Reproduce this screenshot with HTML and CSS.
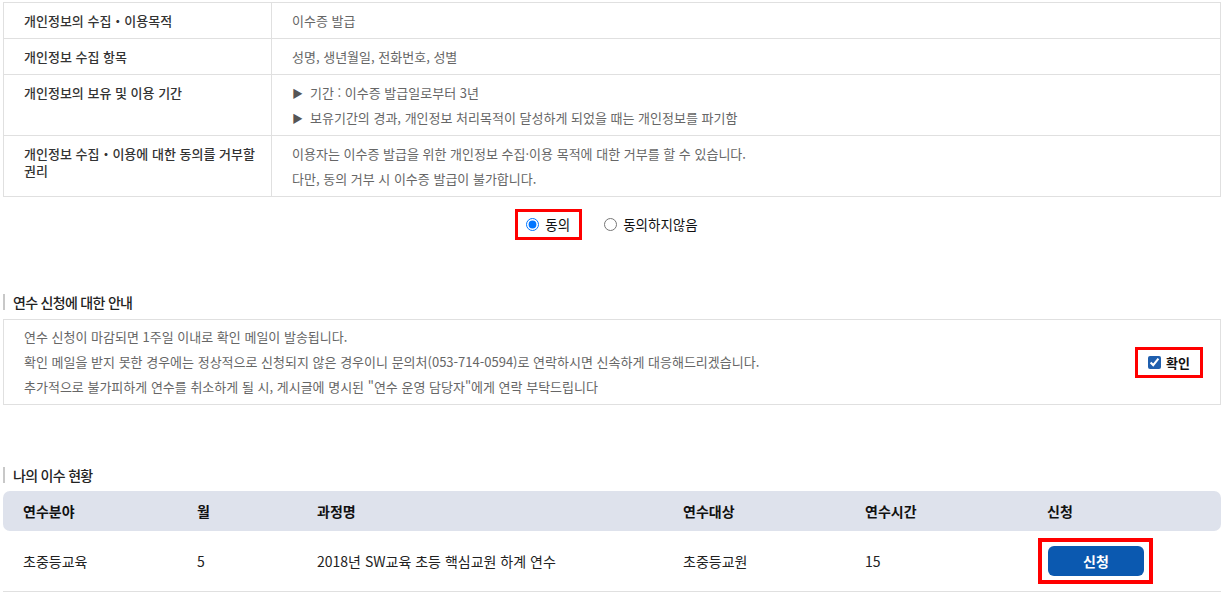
FILE: index.html
```html
<!DOCTYPE html>
<html lang="ko">
<head>
  <meta charset="UTF-8" />
  <meta name="viewport" content="width=device-width, initial-scale=1.0"/>
  <title>연수 신청</title>
  <link rel="stylesheet" href="styles.css">
</head>
<body>
  <div class="wrap">
    <table class="privacy">
      <colgroup>
        <col style="width:268px">
        <col>
      </colgroup>
      <tr>
        <th>개인정보의 수집・이용목적</th>
        <td><p>이수증 발급</p></td>
      </tr>
      <tr>
        <th>개인정보 수집 항목</th>
        <td><p>성명, 생년월일, 전화번호, 성별</p></td>
      </tr>
      <tr>
        <th>개인정보의 보유 및 이용 기간</th>
        <td>
          <p><span class="arrow">▶</span>기간 : 이수증 발급일로부터 3년</p>
          <p><span class="arrow">▶</span>보유기간의 경과, 개인정보 처리목적이 달성하게 되었을 때는 개인정보를 파기함</p>
        </td>
      </tr>
      <tr>
        <th>개인정보 수집・이용에 대한 동의를 거부할 권리</th>
        <td>
          <p>이용자는 이수증 발급을 위한 개인정보 수집·이용 목적에 대한 거부를 할 수 있습니다.</p>
          <p>다만, 동의 거부 시 이수증 발급이 불가합니다.</p>
        </td>
      </tr>
    </table>

    <div class="agree">
      <label class="mark"><input type="radio" name="agree" checked> 동의</label>
      <label class="no"><input type="radio" name="agree"> 동의하지않음</label>
    </div>

    <h3 class="sec-title">연수 신청에 대한 안내</h3>
    <div class="notice">
      <div class="notice-text">
        <p>연수 신청이 마감되면 1주일 이내로 확인 메일이 발송됩니다.</p>
        <p>확인 메일을 받지 못한 경우에는 정상적으로 신청되지 않은 경우이니 문의처(053-714-0594)로 연락하시면 신속하게 대응해드리겠습니다.</p>
        <p>추가적으로 불가피하게 연수를 취소하게 될 시, 게시글에 명시된 "연수 운영 담당자"에게 연락 부탁드립니다</p>
      </div>
      <label class="mark check"><input type="checkbox" checked> 확인</label>
    </div>

    <h3 class="sec-title second">나의 이수 현황</h3>
    <table class="status">
      <colgroup>
        <col style="width:174px">
        <col style="width:120px">
        <col style="width:366px">
        <col style="width:182px">
        <col style="width:182px">
        <col>
      </colgroup>
      <thead>
        <tr>
          <th>연수분야</th>
          <th>월</th>
          <th>과정명</th>
          <th>연수대상</th>
          <th>연수시간</th>
          <th>신청</th>
        </tr>
      </thead>
      <tbody>
        <tr>
          <td>초중등교육</td>
          <td>5</td>
          <td>2018년 SW교육 초등 핵심교원 하계 연수</td>
          <td>초중등교원</td>
          <td>15</td>
          <td class="btn-cell"><span class="mark-btn"><button type="button">신청</button></span></td>
        </tr>
      </tbody>
    </table>
  </div>
</body>
</html>
```

FILE: styles.css
```css
body {
  margin: 0;
  font-family: "Noto Sans CJK KR", sans-serif;
  font-size: 13px;
  color: #333;
  background: #fff;
}

.wrap {
  padding: 2px 3px 0 3px;
}

p {
  margin: 0;
}

.privacy {
  width: 100%;
  table-layout: fixed;
  border-collapse: collapse;
  border: 1px solid #e0e0e0;
}

.privacy th,
.privacy td {
  border-top: 1px solid #e0e0e0;
  vertical-align: top;
  text-align: left;
}

.privacy th {
  padding: 9px 8px 8px 20px;
  line-height: 17px;
  font-weight: 500;
  color: #333;
  border-right: 1px solid #e0e0e0;
}

.privacy td {
  padding: 8px 20px 7px;
  color: #666;
  line-height: 20px;
}

.privacy td p + p {
  margin-top: 5px;
}

.arrow {
  font-size: 11px;
  color: #555;
  margin-right: 7px;
}

.agree {
  display: flex;
  justify-content: center;
  align-items: center;
  gap: 22px;
  margin-top: 12px;
  padding-right: 11px;
  font-size: 13.5px;
  color: #111;
}

.agree label,
.check {
  display: flex;
  align-items: center;
  gap: 6px;
  line-height: 21px;
}

.agree input,
.check input {
  width: 13px;
  height: 13px;
  margin: 0;
}

.mark {
  border: 3px solid #f00;
  padding: 2px 9px 2px 8px;
}

.sec-title {
  margin: 54px 0 9px;
  padding-left: 8px;
  border-left: 2px solid #c8c8c8;
  font-size: 14px;
  font-weight: 500;
  line-height: 16px;
  letter-spacing: -0.05em;
  color: #222;
}

.sec-title.second {
  margin-top: 62px;
  margin-bottom: 8px;
}

.notice {
  display: flex;
  align-items: center;
  justify-content: space-between;
  border: 1px solid #e0e0e0;
  padding: 7px 17px 7px 20px;
  color: #666;
  line-height: 20px;
}

.notice-text p + p {
  margin-top: 5px;
}

.check {
  padding: 2px 10px 2px 10px;
  gap: 5px;
  font-weight: 700;
  color: #111;
  accent-color: #1f5fae;
}

.status {
  width: 100%;
  table-layout: fixed;
  border-collapse: separate;
  border-spacing: 0;
}

.status th {
  background: #dee2ec;
  height: 40px;
  padding: 0 20px;
  text-align: left;
  font-size: 14px;
  font-weight: 700;
  color: #111;
}

.status th:first-child {
  border-radius: 7px 0 0 7px;
}

.status th:last-child {
  border-radius: 0 7px 7px 0;
}

.status td {
  height: 60px;
  padding: 0 20px;
  border-bottom: 1px solid #e0e0e0;
  font-size: 14px;
  color: #222;
}

.status td.btn-cell {
  padding-left: 11px;
}

.mark-btn {
  display: inline-block;
  border: 4px solid #f00;
  padding: 4px 5px 4px 6px;
  vertical-align: middle;
}

.mark-btn button {
  display: block;
  width: 96px;
  height: 30px;
  border: none;
  border-radius: 6px;
  background: #0b59b0;
  color: #fff;
  font-family: inherit;
  font-size: 14px;
  font-weight: 700;
  cursor: pointer;
}
```
